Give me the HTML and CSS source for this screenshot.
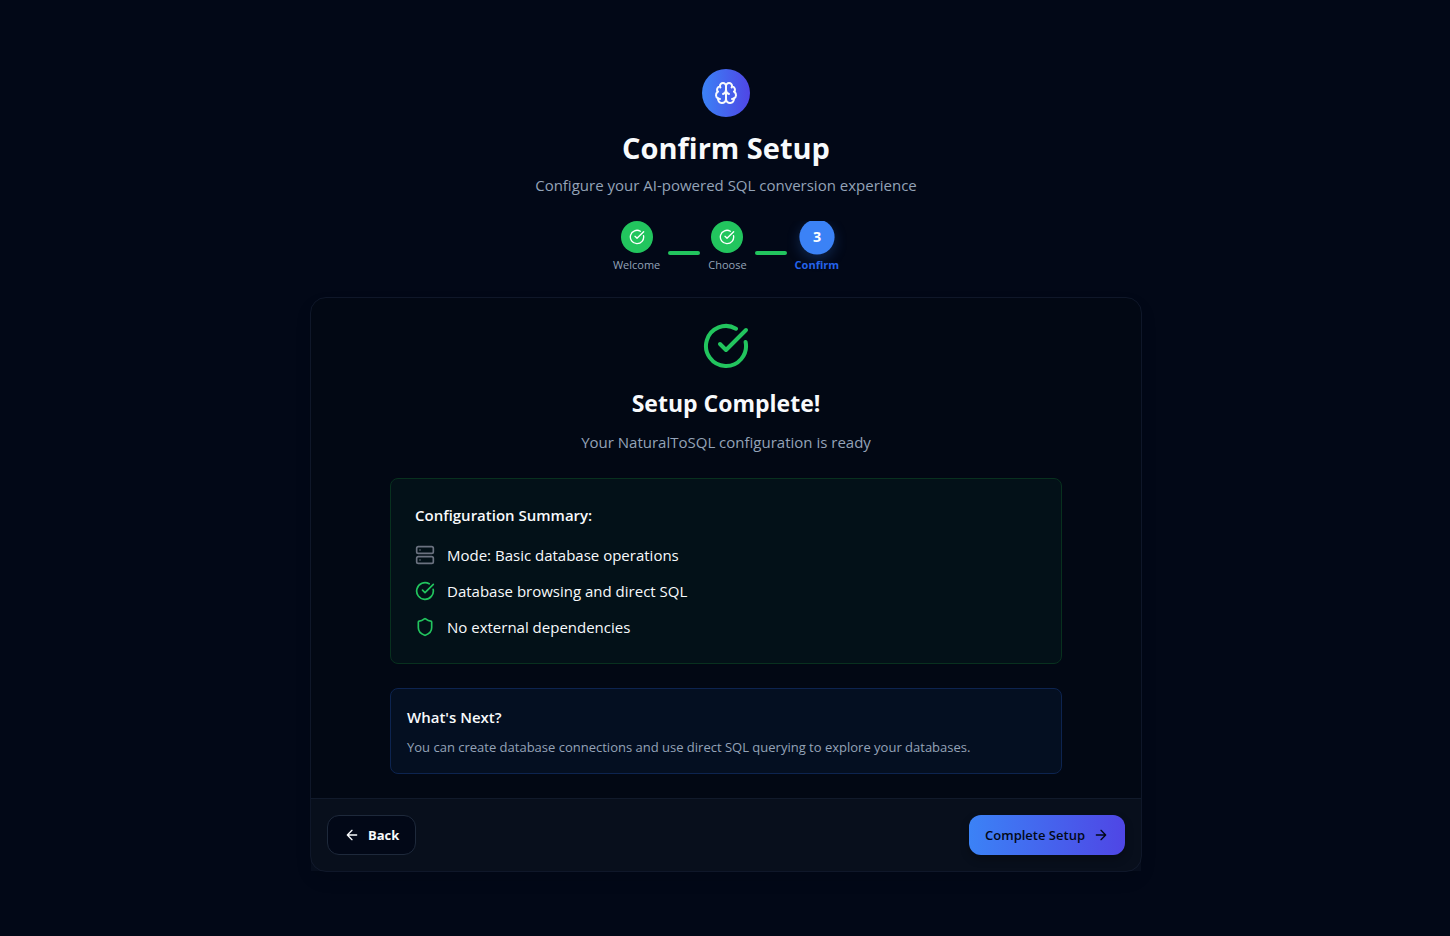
FILE: index.html
```html
<!DOCTYPE html>
<html lang="en">
<head>
<meta charset="utf-8">
<meta name="viewport" content="width=device-width, initial-scale=1">
<title>Confirm Setup</title>
<link rel="stylesheet" href="styles.css">
</head>
<body>
<svg class="sprite" aria-hidden="true">
  <symbol id="check" viewBox="0 0 24 24"><path d="M21.801 10A10 10 0 1 1 17 3.335"/><path d="m9 11 3 3L22 4"/></symbol>
</svg>
<main class="page">
  <header class="header">
    <div class="logo">
      <svg class="icon icon-lg" viewBox="0 0 24 24" aria-hidden="true"><path d="M12 5a3 3 0 1 0-5.997.125 4 4 0 0 0-2.526 5.77 4 4 0 0 0 .556 6.588A4 4 0 1 0 12 18Z"/><path d="M12 5a3 3 0 1 1 5.997.125 4 4 0 0 1 2.526 5.77 4 4 0 0 1-.556 6.588A4 4 0 1 1 12 18Z"/><path d="M15 13a4.5 4.5 0 0 1-3-4 4.5 4.5 0 0 1-3 4"/><path d="M17.599 6.5a3 3 0 0 0 .399-1.375"/><path d="M6.003 5.125A3 3 0 0 0 6.401 6.5"/><path d="M3.477 10.896a4 4 0 0 1 .585-.396"/><path d="M19.938 10.5a4 4 0 0 1 .585.396"/><path d="M6 18a4 4 0 0 1-1.967-.516"/><path d="M19.967 17.484A4 4 0 0 1 18 18"/></svg>
    </div>
    <h1 class="title">Confirm Setup</h1>
    <p class="subtitle">Configure your AI-powered SQL conversion experience</p>
  </header>

  <ol class="steps">
    <li class="step">
      <span class="step-dot"><svg class="icon icon-sm" aria-hidden="true"><use href="#check"/></svg></span>
      <span class="step-label">Welcome</span>
    </li>
    <li class="step-line" aria-hidden="true"></li>
    <li class="step">
      <span class="step-dot"><svg class="icon icon-sm" aria-hidden="true"><use href="#check"/></svg></span>
      <span class="step-label">Choose</span>
    </li>
    <li class="step-line" aria-hidden="true"></li>
    <li class="step step-current" aria-current="step">
      <span class="step-dot">3</span>
      <span class="step-label">Confirm</span>
    </li>
  </ol>

  <section class="card">
    <div class="card-body">
      <svg class="icon icon-xl green" aria-hidden="true"><use href="#check"/></svg>
      <h2 class="card-title">Setup Complete!</h2>
      <p class="card-text">Your NaturalToSQL configuration is ready</p>

      <div class="panel summary">
        <h3 class="panel-title">Configuration Summary:</h3>
        <ul class="list">
          <li class="row">
            <svg class="icon icon-md gray" viewBox="0 0 24 24" aria-hidden="true"><rect width="20" height="8" x="2" y="2" rx="2"/><rect width="20" height="8" x="2" y="14" rx="2"/><path d="M6 6h.01M6 18h.01"/></svg>
            <span>Mode: Basic database operations</span>
          </li>
          <li class="row">
            <svg class="icon icon-md green" aria-hidden="true"><use href="#check"/></svg>
            <span>Database browsing and direct SQL</span>
          </li>
          <li class="row">
            <svg class="icon icon-md green" viewBox="0 0 24 24" aria-hidden="true"><path d="M20 13c0 5-3.5 7.5-7.66 8.95a1 1 0 0 1-.67-.01C7.5 20.5 4 18 4 13V6a1 1 0 0 1 1-1c2 0 4.5-1.2 6.24-2.72a1.17 1.17 0 0 1 1.52 0C14.51 3.81 17 5 19 5a1 1 0 0 1 1 1z"/></svg>
            <span>No external dependencies</span>
          </li>
        </ul>
      </div>

      <div class="panel next">
        <h3 class="panel-title">What's Next?</h3>
        <p class="panel-text">You can create database connections and use direct SQL querying to explore your databases.</p>
      </div>
    </div>

    <footer class="card-footer">
      <button type="button" class="button button-outline">
        <svg class="icon icon-sm" viewBox="0 0 24 24" aria-hidden="true"><path d="m12 19-7-7 7-7M19 12H5"/></svg>
        Back
      </button>
      <button type="button" class="button button-primary">
        Complete Setup
        <svg class="icon icon-sm" viewBox="0 0 24 24" aria-hidden="true"><path d="M5 12h14M12 5l7 7-7 7"/></svg>
      </button>
    </footer>
  </section>
</main>
</body>
</html>
```

FILE: styles.css
```css
* { box-sizing: border-box; margin: 0; padding: 0; }

body {
  padding-left: 2px;
  background: #020817;
  color: #f8fafc;
  font-family: "Segoe UI", "Open Sans", "Noto Sans", sans-serif;
  font-size: 15px;
  line-height: 24px;
}

ol, ul { list-style: none; }

.sprite { display: none; }

.page {
  min-height: 100vh;
  max-width: 864px;
  margin: 0 auto;
  padding: 69px 16px 64px;
}

.icon {
  flex: none;
  fill: none;
  stroke: currentColor;
  stroke-width: 2;
  stroke-linecap: round;
  stroke-linejoin: round;
}
.icon-sm { width: 16px; height: 16px; }
.icon-md { width: 20px; height: 20px; }
.icon-lg { width: 24px; height: 24px; }
.icon-xl { width: 48px; height: 48px; }
.green { color: #22c55e; }
.gray { color: #6b7280; }

.header {
  display: flex;
  flex-direction: column;
  align-items: center;
  text-align: center;
}

.logo {
  display: grid;
  place-items: center;
  width: 48px;
  height: 48px;
  margin-bottom: 12px;
  border-radius: 50%;
  background: linear-gradient(to right, #3b82f6, #4f46e5);
}

.title {
  margin-bottom: 6px;
  font-size: 29px;
  line-height: 38px;
  font-weight: 700;
}

.subtitle { color: #94a3b8; }

.steps {
  display: flex;
  justify-content: center;
  align-items: center;
  gap: 8px;
  margin: 24px 0;
  overflow: hidden;
}

.step {
  display: flex;
  flex-direction: column;
  align-items: center;
  gap: 4px;
}

.step-dot {
  display: grid;
  place-items: center;
  width: 32px;
  height: 32px;
  border-radius: 50%;
  background: #22c55e;
  color: #fff;
  font-size: 13px;
  line-height: 20px;
  font-weight: 700;
}

.step-label {
  color: #94a3b8;
  font-size: 11px;
  line-height: 16px;
}

.step-current .step-dot {
  background: #3b82f6;
  box-shadow: 0 4px 12px rgb(59 130 246 / 25%);
  transform: scale(1.1);
}
.step-current .step-label { color: #2563eb; font-weight: 700; }

.step-line {
  width: 32px;
  height: 4px;
  margin-top: 12px;
  border-radius: 2px;
  background: #22c55e;
}

.card {
  border: 1px solid #0f1729;
  border-radius: 16px;
  background: #020814;
  box-shadow: 0 8px 16px rgb(0 0 0 / 10%);
}

.card-body {
  display: flex;
  flex-direction: column;
  align-items: center;
  padding: 24px;
  text-align: center;
}

.card-title {
  margin: 16px 0 10px;
  font-size: 23px;
  line-height: 34px;
  font-weight: 700;
}

.card-text { color: #94a3b8; }

.panel {
  width: 100%;
  max-width: 672px;
  margin-top: 24px;
  border: 1px solid;
  border-radius: 8px;
  text-align: left;
}

.panel-title { font-size: 15px; font-weight: 600; }

.summary {
  padding: 24px;
  border-color: #08311f;
  background: #031118;
}

.list {
  display: grid;
  gap: 12px;
  margin-top: 16px;
}

.row {
  display: flex;
  align-items: center;
  gap: 12px;
}

.next {
  padding: 16px;
  border-color: #0d2450;
  background: #040f21;
}

.panel-text {
  margin-top: 8px;
  color: #94a3b8;
  font-size: 13px;
  line-height: 20px;
}

.card-footer {
  display: flex;
  justify-content: space-between;
  padding: 16px;
  border-top: 1px solid #111a2b;
  background: rgb(30 41 59 / 22%);
}

.button {
  display: inline-flex;
  align-items: center;
  gap: 8px;
  height: 40px;
  padding: 0 16px;
  border: 0;
  border-radius: 12px;
  font-family: inherit;
  font-size: 13px;
  line-height: 20px;
  font-weight: 600;
  cursor: pointer;
}

.button-outline {
  border: 1px solid #1e293b;
  background: #020817;
  color: #f8fafc;
  font-weight: 700;
}

.button-primary {
  background: linear-gradient(to right, #3b82f6, #4f46e5);
  box-shadow: 0 4px 8px rgb(0 0 0 / 30%);
  color: #020817;
}
```
